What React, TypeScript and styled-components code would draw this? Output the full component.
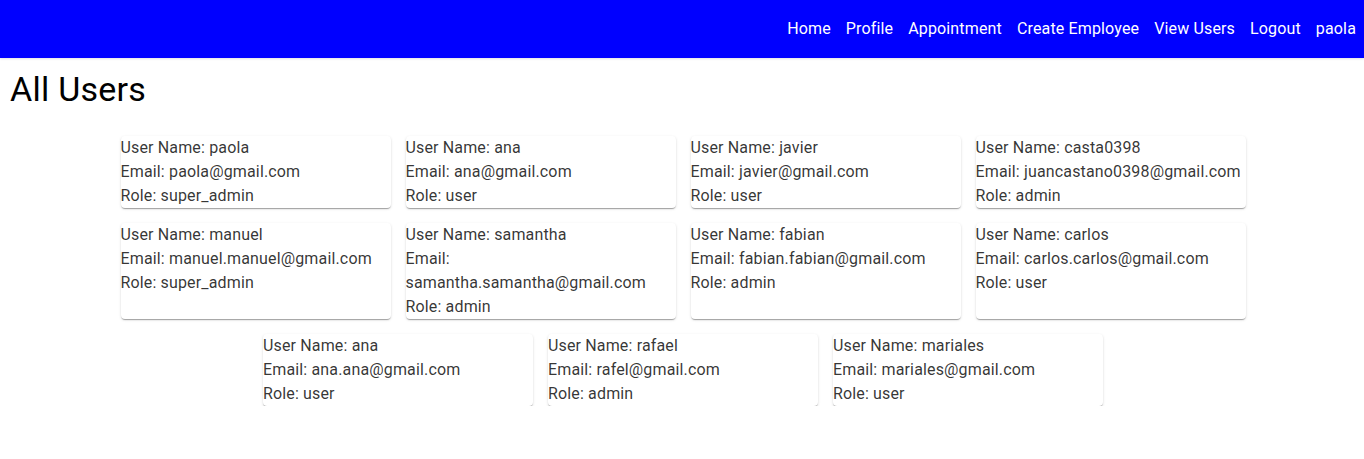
import React from "react";
import styled, { createGlobalStyle } from "styled-components";

const Global = createGlobalStyle`
  html, body { margin: 0; padding: 0; background: #fff; }
  body { font-family: Roboto, "Noto Sans", Arial, sans-serif; }
`;

const Header = styled.header`
  height: 58px;
  background: #0000ff;
  display: flex;
  align-items: center;
  justify-content: flex-end;
  padding-right: 8px;
  box-shadow: 0px 1px 2px rgba(0,0,60,0.12);
`;

const Nav = styled.nav`
  display: flex;
  gap: 15px;
`;

const NavLink = styled.a`
  color: #fff;
  font-size: 16px;
  line-height: 24px;
  letter-spacing: 0.15px;
  text-decoration: none;
  cursor: pointer;
`;

const Title = styled.h1`
  margin: 10px 0 0 10px;
  font-size: 34px;
  font-weight: 400;
  line-height: 42px;
  letter-spacing: 0.25px;
  color: #000;
`;

const Grid = styled.div`
  display: flex;
  flex-wrap: wrap;
  justify-content: center;
  gap: 15px;
  margin-top: 26px;
  padding-left: 2px;
`;

const Card = styled.div`
  width: 270px;
  background: #fff;
  border-radius: 4px;
  box-shadow: 0px 2px 1px -1px rgba(0,0,0,0.2), 0px 1px 1px 0px rgba(0,0,0,0.14), 0px 1px 3px 0px rgba(0,0,0,0.12);
  color: rgba(0,0,0,0.8);
  font-size: 16px;
  line-height: 24px;
  letter-spacing: 0.15px;
  word-wrap: break-word;
`;

const Line = styled.div``;

const users = [
  { name: "paola", email: "paola@gmail.com", role: "super_admin" },
  { name: "ana", email: "ana@gmail.com", role: "user" },
  { name: "javier", email: "javier@gmail.com", role: "user" },
  { name: "casta0398", email: "juancastano0398@gmail.com", role: "admin" },
  { name: "manuel", email: "manuel.manuel@gmail.com", role: "super_admin" },
  { name: "samantha", email: "samantha.samantha@gmail.com", role: "admin" },
  { name: "fabian", email: "fabian.fabian@gmail.com", role: "admin" },
  { name: "carlos", email: "carlos.carlos@gmail.com", role: "user" },
  { name: "ana", email: "ana.ana@gmail.com", role: "user" },
  { name: "rafael", email: "rafel@gmail.com", role: "admin" },
  { name: "mariales", email: "mariales@gmail.com", role: "user" },
];

const links = ["Home", "Profile", "Appointment", "Create Employee", "View Users", "Logout", "paola"];

export default function App() {
  return (
    <>
      <Global />
      <Header>
        <Nav>
          {links.map((l) => (
            <NavLink key={l}>{l}</NavLink>
          ))}
        </Nav>
      </Header>
      <Title>All Users</Title>
      <Grid>
        {users.map((u, i) => (
          <Card key={i}>
            <Line>User Name: {u.name}</Line>
            <Line>Email: {u.email}</Line>
            <Line>Role: {u.role}</Line>
          </Card>
        ))}
      </Grid>
    </>
  );
}
